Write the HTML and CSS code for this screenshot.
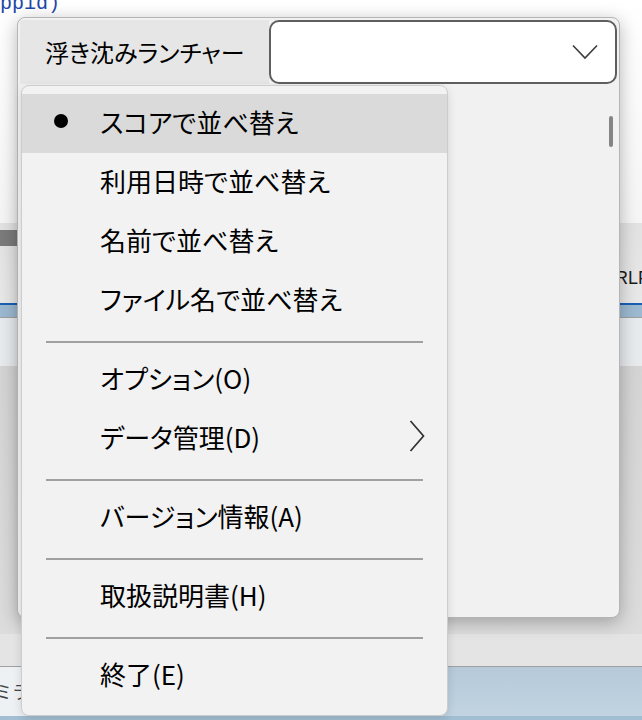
FILE: index.html
```html
<!DOCTYPE html>
<html lang="ja">
<head>
  <meta charset="UTF-8" />
  <title>浮き沈みランチャー</title>
  <link rel="stylesheet" href="styles.css">
</head>
<body>
  <div class="desk">

    <!-- the app that sits behind the launcher -->
    <div class="backapp">
      <div class="back-top"><span class="code">ppid)</span></div>
      <div class="back-pane">
        <div class="back-sel"></div>
        <div class="back-eol">CRLF</div>
      </div>
      <div class="back-tabline"></div>
      <div class="back-tabbar"></div>
      <div class="back-rule"></div>
      <div class="back-list"></div>
      <div class="back-status"></div>
      <div class="back-rule"></div>
      <div class="back-task">
        <div class="back-cell">ミラー</div>
      </div>
      <div class="back-foot"></div>
    </div>

    <div class="launcher">
      <div class="launcher-head">
        <div class="launcher-title">浮き沈みランチャー</div>
        <div class="combo">
          <svg class="combo-arrow" width="26" height="16" viewBox="0 0 26 16">
            <polyline points="1,1.5 13,14 25,1.5" fill="none" stroke="#3c3c3c" stroke-width="1.6" />
          </svg>
        </div>
      </div>
      <div class="launcher-body">
        <div class="thumb"></div>
      </div>
    </div>

    <div class="menu">
      <div class="item hover"><span class="mark"><span class="dot"></span></span><span class="label">スコアで並べ替え</span></div>
      <div class="item"><span class="mark"></span><span class="label">利用日時で並べ替え</span></div>
      <div class="item"><span class="mark"></span><span class="label">名前で並べ替え</span></div>
      <div class="item"><span class="mark"></span><span class="label">ファイル名で並べ替え</span></div>
      <div class="sep"></div>
      <div class="item"><span class="mark"></span><span class="label">オプション(O)</span></div>
      <div class="item"><span class="mark"></span><span class="label">データ管理(D)</span>
        <span class="sub">
          <svg width="16" height="32" viewBox="0 0 16 32">
            <polyline points="1.5,1 14.5,16 1.5,31" fill="none" stroke="#303030" stroke-width="1.7" />
          </svg>
        </span>
      </div>
      <div class="sep"></div>
      <div class="item"><span class="mark"></span><span class="label">バージョン情報(A)</span></div>
      <div class="sep"></div>
      <div class="item"><span class="mark"></span><span class="label">取扱説明書(H)</span></div>
      <div class="sep"></div>
      <div class="item"><span class="mark"></span><span class="label">終了(E)</span></div>
    </div>

  </div>
</body>
</html>
```

FILE: styles.css
```css
body {
  margin: 0;
  font-family: 'Noto Sans CJK JP', 'Noto Sans', sans-serif;
  background: #fff;
  overflow: hidden;
}
.desk {
  position: relative;
  width: 642px;
  height: 720px;
  overflow: hidden;
}

/* background application */
.backapp {
  position: absolute;
  inset: 0;
  display: flex;
  flex-direction: column;
}
.back-top {
  height: 223px;
  background: linear-gradient(to bottom, #fff, #f5f5f5);
  overflow: hidden;
}
.code {
  display: block;
  margin-top: -8px;
  font-family: 'Liberation Mono', monospace;
  font-size: 20px;
  color: #1d48a6;
}
.back-pane {
  height: 80px;
  display: flex;
  background: linear-gradient(to bottom, #e2e2e2, #e8e8e8);
}
.back-sel {
  width: 17px;
  height: 16px;
  margin-top: 7px;
  background: #7b7b7b;
}
.back-eol {
  margin-left: auto;
  margin-right: -7px;
  padding-top: 45px;
  font-family: 'Liberation Sans', sans-serif;
  font-size: 18px;
  color: #1a1a1a;
  white-space: nowrap;
}
.back-tabline {
  height: 2px;
  background: #1a5fb4;
}
.back-tabbar {
  height: 12px;
  background: #9cb9d1;
}
.back-rule {
  height: 1px;
  background: #a0a0a0;
}
.back-list {
  flex: 1;
  background: linear-gradient(to bottom, #e8ebee 0, #e8ebee 48px, #d4d4d4 48px, #dcdcdc);
}
.back-status {
  height: 32px;
  background: #e4e4e4;
}
.back-task {
  height: 49px;
  background: linear-gradient(to bottom, #b5c9d9, #c2d4e1);
}
.back-cell {
  width: 160px;
  height: 100%;
  background: #eef1f4;
  font-size: 18px;
  line-height: 49px;
  color: #444;
  text-indent: -6px;
}
.back-foot {
  height: 4px;
  background: #a2bed3;
}

/* launcher window */
.launcher {
  position: absolute;
  left: 17px;
  top: 17px;
  width: 603px;
  height: 601px;
  box-sizing: border-box;
  border: 1px solid #b5b5b5;
  border-radius: 8px;
  padding: 2px;
  background: #f1f1f1;
  box-shadow: 0 4px 18px rgba(0, 0, 0, 0.28);
  display: flex;
  flex-direction: column;
}
.launcher-head {
  display: flex;
  height: 64px;
}
.launcher-title {
  width: 249px;
  background: #e6e6e6;
  font-size: 24px;
  line-height: 64px;
  padding-left: 25px;
  box-sizing: border-box;
  color: #000;
  font-feature-settings: "palt";
}
.combo {
  flex: 1;
  box-sizing: border-box;
  border: 2px solid #5f5f5f;
  border-radius: 10px;
  background: #fff;
  display: flex;
  align-items: center;
  justify-content: flex-end;
  padding-right: 17px;
}
.launcher-body {
  flex: 1;
  display: flex;
  justify-content: flex-end;
  padding: 32px 4px 0 0;
}
.thumb {
  width: 4px;
  height: 31px;
  border-radius: 2px;
  background: #858585;
}

/* context menu */
.menu {
  position: absolute;
  left: 21px;
  top: 85px;
  width: 427px;
  height: 631px;
  box-sizing: border-box;
  border: 1px solid #cdcdcd;
  border-radius: 8px;
  background: #f2f2f2;
  padding: 8px 0 10px;
  box-shadow: 0 3px 10px rgba(0, 0, 0, 0.12);
}
.item {
  height: 59px;
  box-sizing: border-box;
  padding-bottom: 5px;
  display: flex;
  align-items: center;
  font-size: 26px;
  color: #000;
  font-feature-settings: "palt";
}
.item.hover {
  background: #dadada;
}
.mark {
  width: 78px;
  display: flex;
  justify-content: center;
}
.dot {
  width: 14px;
  height: 14px;
  border-radius: 50%;
  background: #000;
}
.label {
  flex: 1;
}
.sub {
  width: 60px;
  display: flex;
  justify-content: center;
}
.sep {
  height: 2px;
  margin: 11px 24px 7px;
  background: #a0a0a0;
}
```
